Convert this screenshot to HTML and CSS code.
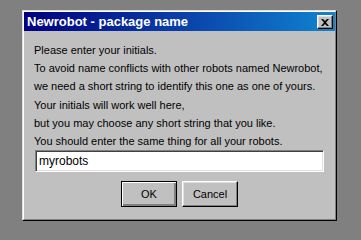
FILE: index.html
```html
<!DOCTYPE html>
<html>
<head>
<meta charset="utf-8">
<link rel="stylesheet" href="styles.css">
</head>
<body>
<div class="window">
  <div class="frame">
    <div class="titlebar">
      <span class="title">Newrobot - package name</span>
      <span class="close"><svg width="8" height="7" viewBox="0 0 8 7"><path d="M0 0h2l2 2 2-2h2L5 3.5 8 7H6L4 5 2 7H0l3-3.5z" fill="#000"/></svg></span>
    </div>
    <div class="content">
      <div class="msg">
        <div>Please enter your initials.</div>
        <div>To avoid name conflicts with other robots named Newrobot,</div>
        <div>we need a short string to identify this one as one of yours.</div>
        <div>Your initials will work well here,</div>
        <div>but you may choose any short string that you like.</div>
        <div>You should enter the same thing for all your robots.</div>
      </div>
      <div class="field">myrobots</div>
      <div class="buttons">
        <div class="btn default"><span>OK</span></div>
        <div class="btn"><span>Cancel</span></div>
      </div>
    </div>
  </div>
</div>
</body>
</html>
```
FILE: styles.css
```css
html, body {
  margin: 0;
  padding: 0;
}
body {
  background: #808080;
  padding: 10px 0 0 22px;
  font-family: "Liberation Sans", Arial, sans-serif;
  height: 240px;
  box-sizing: border-box;
}
.window {
  width: 315px;
  height: 211px;
  box-sizing: border-box;
  border: 1px solid;
  border-color: #dfdfdf #000 #000 #dfdfdf;
  background: #c0c0c0;
}
.frame {
  height: 100%;
  box-sizing: border-box;
  border: 1px solid;
  border-color: #fff #808080 #808080 #fff;
}
.titlebar {
  height: 19px;
  background: linear-gradient(to right, #000080 0%, #0a3fa8 50%, #1084d0 100%);
  display: flex;
  align-items: center;
  justify-content: space-between;
  padding: 0 2px 0 3px;
}
.title {
  color: #fff;
  font-weight: bold;
  font-size: 13px;
  line-height: 19px;
}
.close {
  width: 16px;
  height: 14px;
  box-sizing: border-box;
  background: #c0c0c0;
  border: 1px solid;
  border-color: #fff #000 #000 #fff;
  box-shadow: inset -1px -1px 0 #808080, inset 1px 1px 0 #dfdfdf;
  display: flex;
  align-items: center;
  justify-content: center;
  margin-top: 1px;
}
.close svg { display: block; }
.content {
  padding: 10px 0 0 10px;
}
.msg {
  font-size: 11px;
  line-height: 18.2px;
  color: #000;
}
.field {
  margin-left: 1px;
  width: 289px;
  height: 22px;
  box-sizing: border-box;
  background: #fff;
  border: 1px solid;
  border-color: #808080 #fff #fff #808080;
  box-shadow: inset 1px 1px 0 #404040, inset -1px -1px 0 #dfdfdf;
  font-size: 12px;
  line-height: 20px;
  padding-left: 3px;
  color: #000;
}
.buttons {
  margin-top: 9px;
  display: flex;
  justify-content: center;
  gap: 5px;
  padding-right: 10px;
}
.btn {
  width: 56px;
  height: 26px;
  box-sizing: border-box;
  border: 1px solid;
  border-color: #fff #000 #000 #fff;
  box-shadow: inset -1px -1px 0 #808080, inset 1px 1px 0 #dfdfdf;
  display: flex;
  align-items: center;
  justify-content: center;
  font-size: 11px;
  color: #000;
}
.btn.default {
  border-color: #000;
  box-shadow: inset 1px 1px 0 #fff, inset -1px -1px 0 #808080, inset -2px -2px 0 #808080;
}
```
